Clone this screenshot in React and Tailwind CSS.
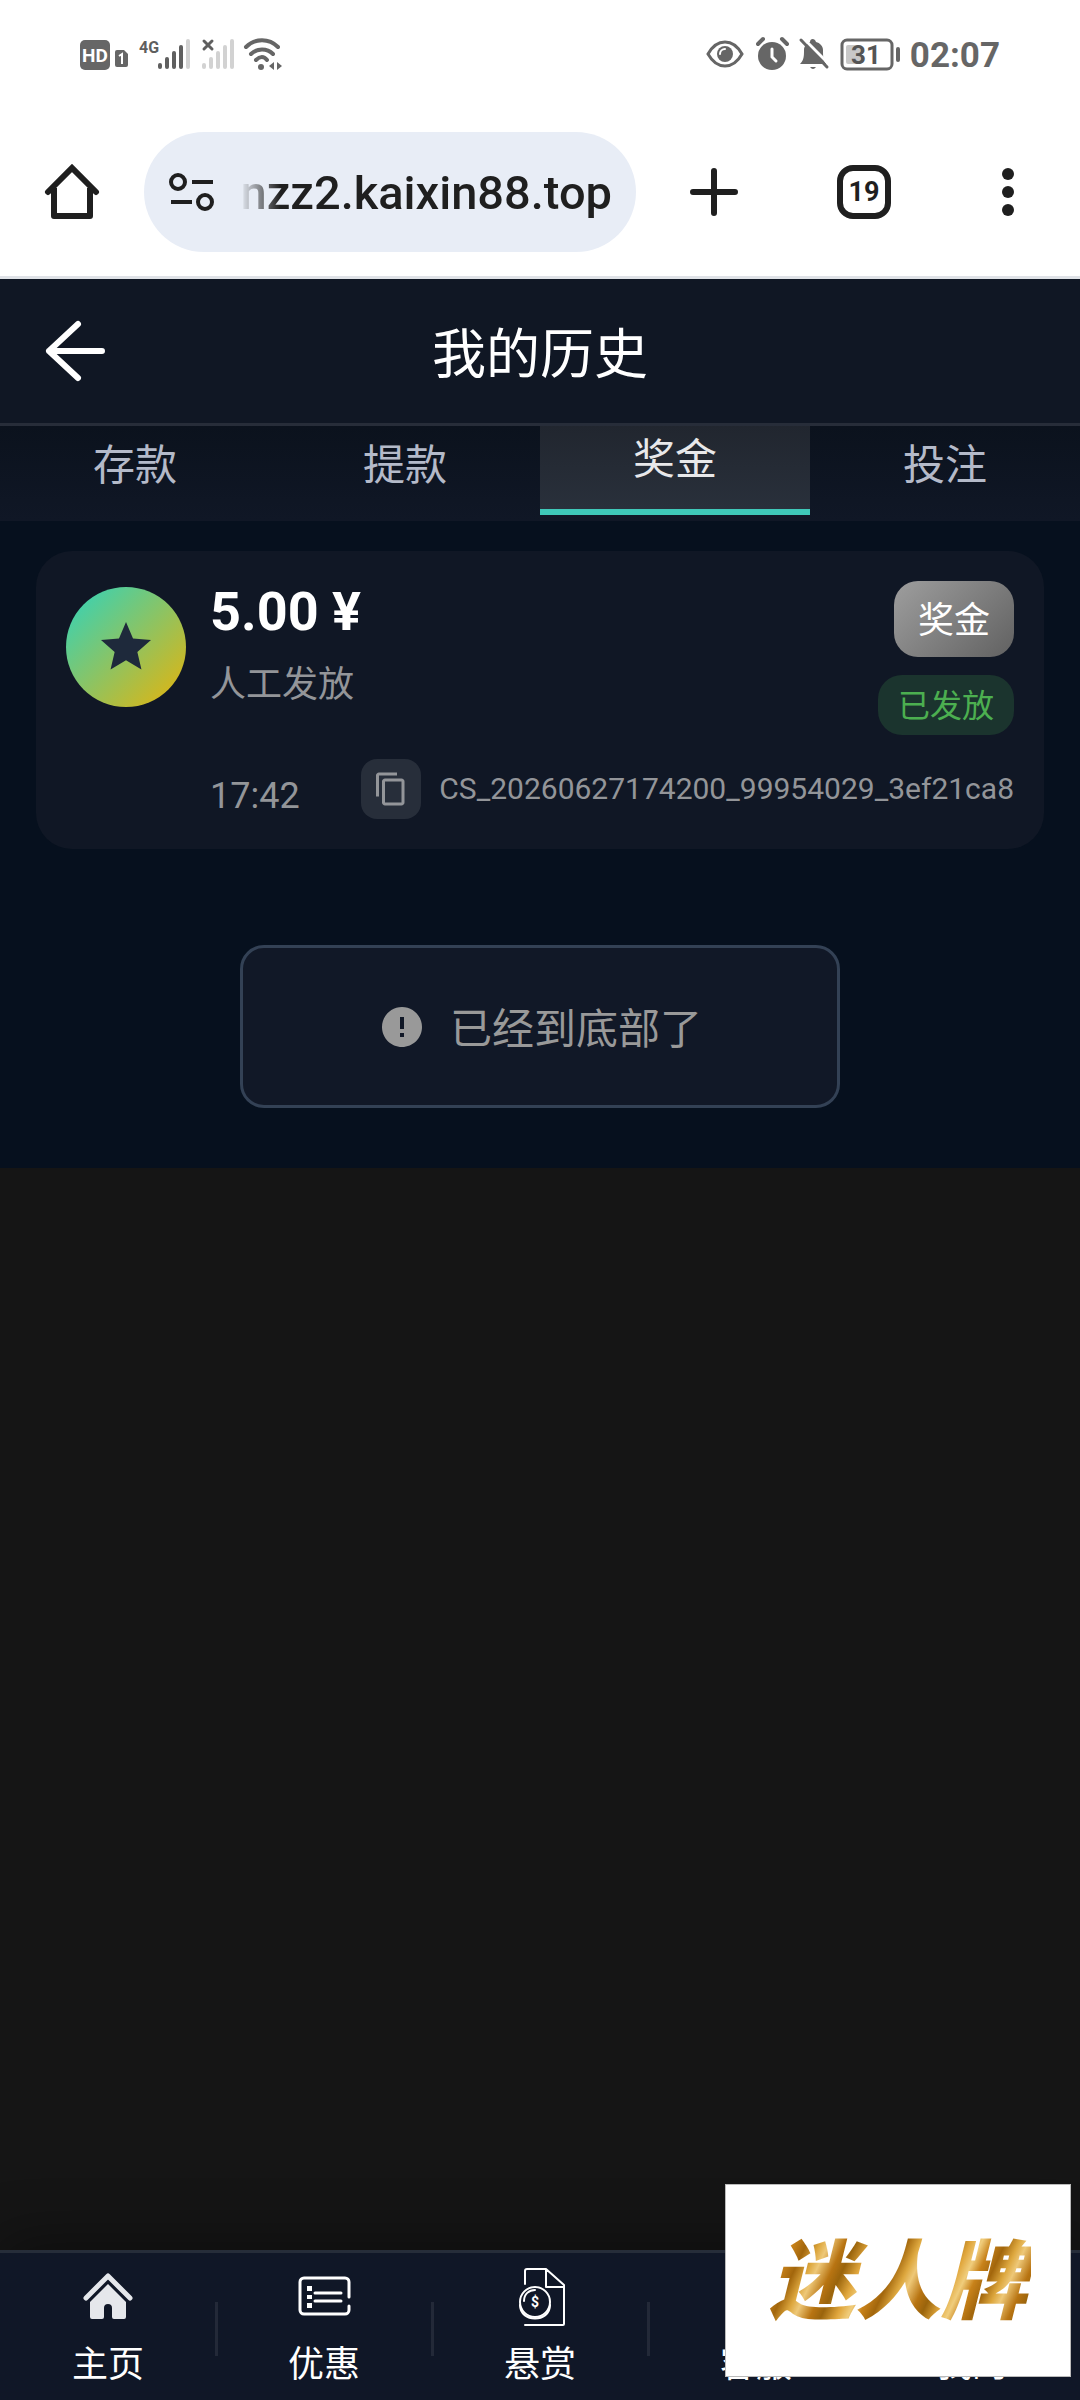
// App.jsx
import { MdContentCopy, MdError, MdStar } from 'react-icons/md';

const tabs = [
  { id: 'deposit', label: '存款' },
  { id: 'withdraw', label: '提款' },
  { id: 'bonus', label: '奖金' },
  { id: 'bet', label: '投注' },
];

const SignalBars = ({ filled, x }) => (
  <>
    {[0, 1, 2, 3, 4].map((i) => (
      <rect
        key={i}
        x={x + i * 7}
        y={27 - i * 6}
        width="4"
        height={6 + i * 6}
        rx="2"
        fill={i < filled ? '#5f5f5f' : '#d2d2d2'}
      />
    ))}
  </>
);

const StatusBar = () => (
  <div className="flex h-27 items-center justify-between px-20 text-[#666]">
    <div className="flex items-center">
      <svg viewBox="0 0 52 36" className="h-9 w-[52px]" aria-label="HD 1">
        <rect x="0" y="4" width="30" height="30" rx="5" fill="#666" />
        <text x="15" y="26" textAnchor="middle" fontSize="19" fontWeight="700" fill="#fff">HD</text>
        <path d="M37 14h7l4 4v11a2 2 0 0 1-2 2h-9a2 2 0 0 1-2-2V16a2 2 0 0 1 2-2z" fill="#666" />
        <path d="M39 20l3-2v10" fill="none" stroke="#fff" strokeWidth="2" />
      </svg>
      {/* SIM 1 */}
      <svg viewBox="0 0 60 36" className="h-9 w-15" aria-label="4G">
        <text x="7" y="17" fontSize="16" fontWeight="700" fill="#5f5f5f">4G</text>
        <SignalBars filled={4} x={26} />
      </svg>
      {/* SIM 2, no service */}
      <svg viewBox="0 0 50 36" className="h-9 w-[50px]" aria-hidden="true">
        <SignalBars filled={0} x={10} />
        <path d="M12 5l8 8M20 5l-8 8" stroke="#5f5f5f" strokeWidth="3" strokeLinecap="round" />
      </svg>
      <svg viewBox="0 0 40 36" className="h-9 w-10" aria-hidden="true" fill="none" stroke="#666" strokeWidth="4" strokeLinecap="round">
        <path d="M4 11C13 2 27 2 36 11M9 18c6-6 16-6 22 0M14 24c4-4 8-4 11 0" />
        <circle cx="19" cy="31" r="3" fill="#666" stroke="none" />
        <path d="M32 26v8l-5-4zM35 26v8l5-4z" fill="#666" stroke="none" />
      </svg>
    </div>
    <div className="flex items-center">
      <svg viewBox="0 0 38 36" className="h-9 w-[38px]" aria-hidden="true">
        <path d="M2 18C11 2 27 2 36 18C27 34 11 34 2 18z" fill="none" stroke="#666" strokeWidth="3" />
        <circle cx="19" cy="18" r="8" fill="#666" />
        <path d="M14 18a5 5 0 0 1 5-5" fill="none" stroke="#fff" strokeWidth="2" strokeLinecap="round" />
      </svg>
      <svg viewBox="0 0 36 36" className="ml-3 h-9 w-9" aria-hidden="true" fill="none" strokeLinecap="round">
        <circle cx="16" cy="20" r="14" fill="#666" />
        <path d="M2 8l5-5M26 3l5 5" stroke="#666" strokeWidth="4" />
        <path d="M16 13v8l4 4" stroke="#fff" strokeWidth="3" />
      </svg>
      <svg viewBox="0 0 32 36" className="ml-1.5 h-9 w-8" aria-hidden="true">
        <path d="M2 28c4-4 4-8 4-14 0-4 3-7 6-8 0-4 5-4 6 0 4 1 7 4 7 8 0 6 0 10 3 14z" fill="#666" />
        <path d="M12 31h6q-3 4-6 0z" fill="#666" />
        <path d="M5 2l27 27" stroke="#fff" strokeWidth="3" />
        <path d="M3 4l26 27" stroke="#666" strokeWidth="3" strokeLinecap="round" />
      </svg>
      <svg viewBox="0 0 62 36" className="ml-2.5 h-9 w-[62px]" aria-label="31%">
        <rect x="2" y="4" width="50" height="29" rx="5" fill="none" stroke="#666" strokeWidth="3" />
        <rect x="6" y="9" width="16" height="19" rx="2" fill="#c8c8c8" />
        <text x="26" y="28" textAnchor="middle" fontSize="26" fontWeight="700" fill="#555">31</text>
        <rect x="56" y="11" width="4" height="15" rx="2" fill="#666" />
      </svg>
      <span className="ml-2 pt-0.5 text-[35px] font-bold leading-none">02:07</span>
    </div>
  </div>
);

const BrowserBar = () => (
  <div className="flex h-[171px] items-center border-b-3 border-[#dfe2e7] pb-[1px] text-[#1f1f1f]">
    <button type="button" aria-label="Home" className="flex w-36 shrink-0 justify-center">
      <svg viewBox="0 0 56 56" className="size-14" fill="none" stroke="currentColor" strokeWidth="6" strokeLinejoin="round">
        <path d="M10 24v28h36V24" />
        <path d="M4 28L28 4l24 24" strokeLinecap="round" strokeLinejoin="miter" />
      </svg>
    </button>
    <div className="flex h-30 min-w-0 flex-1 items-center rounded-full bg-[#e8edf6] pl-6 pr-6">
      <svg viewBox="0 0 48 42" className="h-[42px] w-12 shrink-0" aria-hidden="true" fill="none" stroke="currentColor" strokeWidth="4">
        <circle cx="10" cy="11" r="7" />
        <path d="M24 11h21M3 31h21" />
        <circle cx="37" cy="31" r="7" />
      </svg>
      <input
        aria-label="Address"
        defaultValue="nzz2.kaixin88.top"
        className="ml-6 min-w-0 flex-1 bg-transparent pt-0.5 text-right text-[47px] font-medium leading-[60px] outline-none [mask-image:linear-gradient(to_right,transparent,black_40px)]"
      />
    </div>
    <div className="flex w-111 shrink-0 items-center">
      <button type="button" aria-label="New tab" className="ml-[54px]">
        <svg viewBox="0 0 48 48" className="size-12" stroke="currentColor" strokeWidth="6" strokeLinecap="round">
          <path d="M24 3v42M3 24h42" />
        </svg>
      </button>
      <button type="button" aria-label="Tabs" className="ml-[99px] flex size-[54px] items-center justify-center rounded-2xl border-6 border-current pt-0.5 text-[27px] font-bold leading-none">
        19
      </button>
      <button type="button" aria-label="Menu" className="ml-[111px] flex flex-col gap-1.5">
        <span className="size-3 rounded-full bg-current" />
        <span className="size-3 rounded-full bg-current" />
        <span className="size-3 rounded-full bg-current" />
      </button>
    </div>
  </div>
);

const PageHeader = () => (
  <header className="grid h-[147px] grid-cols-[1fr_auto_1fr] items-center border-b-3 border-[#272d39] bg-[#101724] px-[42px]">
    <button type="button" aria-label="返回" className="w-fit text-white">
      <svg viewBox="0 0 66 66" className="size-[66px]" fill="none" stroke="currentColor" strokeWidth="6" strokeLinecap="round" strokeLinejoin="round">
        <path d="M36 6L7 33l29 27M7 33h53" />
      </svg>
    </button>
    <h1 className="pt-2.5 text-[54px] leading-none text-white">我的历史</h1>
  </header>
);

const HistoryTabs = () => (
  <nav className="grid h-[95px] grid-cols-4 bg-linear-to-b from-[#0b121d] to-[#101726] pb-1.5">
    {tabs.map((tab) => (
      <button
        key={tab.id}
        type="button"
        className={
          tab.id === 'bonus'
            ? 'border-b-6 border-[#3fc8b8] bg-linear-to-b from-[#21262f] to-[#29303b] pb-4 text-[42px] leading-none text-[#e8e8ea]'
            : 'pb-2.5 text-[42px] leading-none text-[#b4bac9]'
        }
      >
        {tab.label}
      </button>
    ))}
  </nav>
);

const BonusCard = () => (
  <article className="rounded-[36px] bg-[#101725] p-[30px]">
    <div className="flex items-start">
      <div className="mt-1.5 flex size-30 shrink-0 items-center justify-center rounded-full bg-[linear-gradient(135deg,#2dd4bf,#eab308)]">
        <MdStar className="size-15 text-[#1e293b]" />
      </div>
      <div className="ml-6 flex-1">
        <p className="text-[54px] font-bold leading-[62px] text-white">5.00 ¥</p>
        <p className="mt-5 text-[36px] leading-[44px] text-[#939599]">人工发放</p>
      </div>
      <div className="flex flex-col items-end">
        <span className="rounded-3xl bg-[linear-gradient(135deg,#9e9e9e,#616161)] px-6 pt-1 text-[36px] leading-[72px] text-white">奖金</span>
        <span className="mt-[18px] rounded-3xl bg-[#1b342e] px-5 pt-0.5 text-[32px] leading-[58px] text-[#4caf50]">已发放</span>
      </div>
    </div>
    <div className="mt-6 flex items-center justify-between pl-36 text-[#939599]">
      <time className="pt-3.5 text-[36px] leading-none">17:42</time>
      <div className="flex items-center">
        <button type="button" aria-label="复制" className="flex size-15 items-center justify-center rounded-2xl bg-[#272e3a]">
          <MdContentCopy className="size-9" />
        </button>
        <span className="ml-[18px] text-[30px] leading-none">CS_20260627174200_99954029_3ef21ca8</span>
      </div>
    </div>
  </article>
);

const HomeIcon = () => (
  <svg viewBox="0 0 60 60" className="size-15" aria-hidden="true">
    <path d="M8 31L30 9l22 22" fill="none" stroke="#e5e7eb" strokeWidth="5" strokeLinecap="round" strokeLinejoin="round" />
    <path d="M30 17l18 18v15a2 2 0 0 1-2 2H36a2 2 0 0 1-2-2V41a4 4 0 0 0-8 0v9a2 2 0 0 1-2 2H14a2 2 0 0 1-2-2V35z" fill="#e5e7eb" />
  </svg>
);

const PromoIcon = () => (
  <svg viewBox="0 0 60 60" className="size-15" aria-hidden="true" fill="none" stroke="#fff" strokeWidth="3" strokeLinecap="round">
    <path d="M55 30V15a4 4 0 0 0-4-4H10a4 4 0 0 0-4 4v28a4 4 0 0 0 4 4h41a4 4 0 0 0 4-4v-4" />
    <path d="M21 26h26M21 34h26" />
    <path d="M13 19h5v5h-5zM13 28h5v4h-5zM13 36h5v5h-5z" fill="#fff" stroke="none" />
  </svg>
);

const BountyIcon = () => (
  <svg viewBox="0 0 60 60" className="size-15" aria-hidden="true" fill="none" stroke="#fff" strokeWidth="2" strokeLinecap="round" strokeLinejoin="round">
    <path d="M15 17V4a2 2 0 0 1 2-2h19l18 16v39a1 1 0 0 1-1 1H15M36 2v18h18" />
    <circle cx="25" cy="35" r="15" />
    <path d="M10 38c0 18 30 18 30 0M14 34c0-7 5-11 11-11" />
    <text x="25" y="40" textAnchor="middle" fontSize="14" fontWeight="700" fill="#fff" stroke="none">$</text>
  </svg>
);

const navItems = [
  { label: '主页', Icon: HomeIcon },
  { label: '优惠', Icon: PromoIcon },
  { label: '悬赏', Icon: BountyIcon },
  { label: '客服' },
  { label: '我的' },
];

const BottomNav = () => (
  <nav className="grid h-[150px] grid-cols-5 border-t-3 border-[#262d39] bg-[#101727] shadow-[0_-6px_60px_rgba(0,0,0,0.4)]">
    {navItems.map(({ label, Icon }, i) => (
      <a key={label} href="#" className="flex items-center">
        <span className="flex h-full flex-1 flex-col items-center pt-3.5">
          <span className="size-15">{Icon && <Icon />}</span>
          <span className="mt-4 text-[36px] leading-[44px] text-white">{label}</span>
        </span>
        {i < 4 && <span className="-ml-px -mr-0.5 mt-1 h-[54px] w-[3px] bg-[#232938]" />}
      </a>
    ))}
  </nav>
);

const BrandBadge = () => (
  <div className="absolute bottom-[23px] right-[9px] flex h-[193px] w-[346px] items-center justify-center border border-[#bbb] bg-white">
    <span className="bg-[repeating-linear-gradient(115deg,#9a640c_0px,#e0a63c_14px,#f0cd7c_24px,#c8821a_34px,#a2660c_46px,#dda73e_58px,#eec878_66px,#b87412_80px,#9a640c_90px)] bg-clip-text px-1 pt-1 text-[86px] font-black italic leading-[110px] text-transparent">
      迷人牌
    </span>
  </div>
);

const App = () => {
  return (
    <div className="relative flex min-h-screen flex-col bg-[#151515] font-[Roboto,'Noto_Sans_CJK_SC',sans-serif]">
      <div className="bg-white">
        <StatusBar />
        <BrowserBar />
      </div>
      <PageHeader />
      <HistoryTabs />
      <main className="bg-[#06101e] px-9 pb-15 pt-[30px]">
        <BonusCard />
        <div className="mx-auto mt-24 flex h-[163px] w-150 items-center justify-center gap-6 rounded-3xl border-3 border-[#334155] bg-[#111827] text-[#999]">
          <MdError className="size-12" />
          <p className="pt-1.5 text-[42px] leading-none">已经到底部了</p>
        </div>
      </main>
      <div className="flex-1" />
      <BottomNav />
      <BrandBadge />
    </div>
  );
};

export default App;
